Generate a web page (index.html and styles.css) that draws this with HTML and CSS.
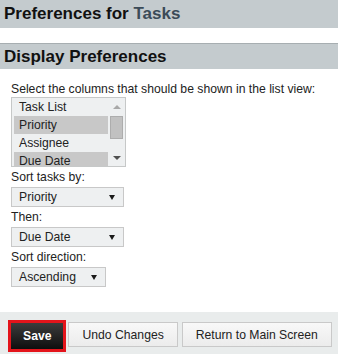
FILE: index.html
```html
<!DOCTYPE html>
<html lang="en">
<head>
<meta charset="utf-8">
<title>Preferences for Tasks</title>
<link rel="stylesheet" href="styles.css">
</head>
<body>
<header class="page-title">Preferences for <span class="entity">Tasks</span></header>
<section class="prefs">
  <h2 class="section-title">Display Preferences</h2>
  <div class="form">
    <p class="label first">Select the columns that should be shown in the list view:</p>
    <div class="listbox">
      <ul class="options">
        <li>Task List</li>
        <li class="sel">Priority</li>
        <li>Assignee</li>
        <li class="sel">Due Date</li>
      </ul>
      <div class="scrollbar">
        <div class="sb-btn"><span class="arrow up"></span></div>
        <div class="thumb"></div>
        <div class="sb-fill"></div>
        <div class="sb-btn down-btn"><span class="arrow down"></span></div>
      </div>
    </div>
    <p class="label">Sort tasks by:</p>
    <div class="select wide"><span>Priority</span><span class="caret"></span></div>
    <p class="label">Then:</p>
    <div class="select wide"><span>Due Date</span><span class="caret"></span></div>
    <p class="label">Sort direction:</p>
    <div class="select narrow"><span>Ascending</span><span class="caret"></span></div>
  </div>
</section>
<footer class="actions">
  <button class="btn primary">Save</button>
  <button class="btn">Undo Changes</button>
  <button class="btn">Return to Main Screen</button>
</footer>
</body>
</html>
```
FILE: styles.css
```css
* { box-sizing: border-box; }
body {
  margin: 0;
  font-family: "Liberation Sans", Arial, sans-serif;
  font-size: 12.2px;
  color: #222;
  background: #fff;
}
.page-title {
  height: 28px;
  line-height: 28px;
  background: #c4cbce;
  padding-left: 4px;
  font-size: 17px;
  font-weight: bold;
  color: #111;
  margin: 0 0 15px;
}
.entity { color: #3b4b58; }
.section-title {
  margin: 0;
  border-top: 1px solid #a7aeb1;
  height: 26px;
  line-height: 25px;
  background: #c4cbce;
  padding-left: 4px;
  font-size: 17px;
  font-weight: bold;
  color: #111;
}
.form { padding: 10px 0 0 11px; }
.label {
  margin: 2px 0;
  line-height: 16px;
}
.label.first { margin-bottom: 0; }
.listbox {
  display: flex;
  width: 115px;
  height: 70px;
  border: 1px solid #c6c8c8;
  background: #eef0f1;
  overflow: hidden;
}
.options {
  list-style: none;
  margin: 0;
  padding: 0 0 0 2px;
  width: 96px;
}
.options li {
  height: 18px;
  line-height: 18px;
  padding-left: 5px;
  color: #222;
}
.options li.sel { background: #c8c8c8; }
.scrollbar {
  width: 17px;
  display: flex;
  flex-direction: column;
}
.sb-btn {
  height: 18px;
  display: flex;
  align-items: center;
  justify-content: center;
}
.down-btn { height: 16px; }
.thumb {
  height: 23px;
  margin: 0 2px;
  background: #c1c1c1;
  border: 1px solid #adadad;
}
.sb-fill { flex: 1; }
.arrow {
  width: 0;
  height: 0;
  border-left: 4px solid transparent;
  border-right: 4px solid transparent;
}
.arrow.up { border-bottom: 4px solid #a8a8a8; }
.arrow.down { border-top: 4px solid #505050; }
.select {
  display: flex;
  justify-content: space-between;
  align-items: center;
  height: 20px;
  border: 1px solid #c8c8c8;
  background: #eef0f1;
  padding: 0 8px 0 7px;
  color: #222;
}
.select.wide { width: 113px; }
.select.narrow { width: 95px; }
.caret {
  width: 0;
  height: 0;
  border-left: 3px solid transparent;
  border-right: 3px solid transparent;
  border-top: 5px solid #1a1a1a;
}
.actions {
  margin-top: 25px;
  height: 42px;
  background: #e9ecec;
  padding: 10px 0 0 11px;
  display: flex;
  align-items: flex-start;
  gap: 4px;
}
.btn {
  height: 25px;
  padding: 0 13px;
  border: 1px solid #c9c9c9;
  background: linear-gradient(#f8f8f8, #ececec);
  font-family: "Liberation Sans", Arial, sans-serif;
  font-size: 12.2px;
  color: #222;
  margin: 0;
}
.btn.primary {
  height: 26px;
  margin: 1px 1px 0 0;
  padding: 0 12px;
  border: none;
  background: linear-gradient(#3c3c3c, #0e0e0e);
  color: #fff;
  font-weight: bold;
  outline: 3px solid #e3141b;
}
```
